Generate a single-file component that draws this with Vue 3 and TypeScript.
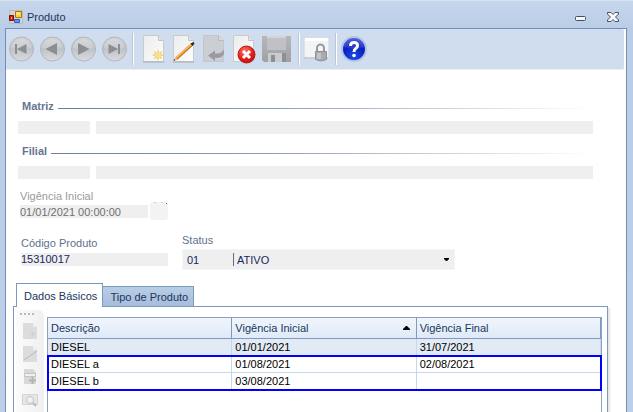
<script setup lang="ts">
import { ref } from 'vue'

interface Row {
  descricao: string
  inicio: string
  fim: string
}

const current: Row[] = [{ descricao: 'DIESEL', inicio: '01/01/2021', fim: '31/07/2021' }]
const highlighted: Row[] = [
  { descricao: 'DIESEL a', inicio: '01/08/2021', fim: '02/08/2021' },
  { descricao: 'DIESEL b', inicio: '03/08/2021', fim: '' },
]

const navButtons = [
  { label: 'Primeiro', bar: 'M7 8h2v10H7z', arrow: 'M18.500 8v10L9 13z' },
  { label: 'Anterior', bar: '', arrow: 'M18 7v12L6.500 13z' },
  { label: 'Próximo', bar: '', arrow: 'M8 7v12l11.500-6z' },
  { label: 'Último', bar: 'M17 8h2v10h-2z', arrow: 'M7.500 8v10L17 13z' },
]

const sections = [
  { id: 'matriz', title: 'Matriz' },
  { id: 'filial', title: 'Filial' },
]

const tab = ref(0)
const vigencia = ref('01/01/2021 00:00:00')
const codigo = ref('15310017')
const statusCode = ref('01')
const status = ref('ATIVO')
</script>

<template>
  <div class="window">
    <header class="titlebar">
      <svg class="app-icon" width="14" height="14" viewBox="0 0 14 14" aria-hidden="true">
        <path d="M.5.500h13v13H.5z" fill="#d0d4da" stroke="#b9bcc2" />
        <path d="M.5 5.500h4v5h-4z" fill="#d81e10" stroke="#7f0c08" />
        <path d="M2 7h1v2H2z" fill="#ffb0a0" />
        <path d="M6.500 1.500h6v6h-6z" fill="#ffd23c" stroke="#a87800" />
        <path d="M7.500 2.500h3v2h-3z" fill="#fff0a0" />
        <path d="M5.500 9.500h5v3h-5z" fill="#5b97ee" stroke="#2c60c0" />
      </svg>
      <h1>Produto</h1>
      <button class="win-btn" type="button" aria-label="Minimizar">
        <svg width="12" height="12" viewBox="0 0 12 12">
          <rect x=".5" y="5.500" width="10" height="4" rx="1" fill="#f4f7fb" stroke="#47505f" />
        </svg>
      </button>
      <button class="win-btn" type="button" aria-label="Fechar">
        <svg width="12" height="12" viewBox="0 0 12 12">
          <path
            d="M.5 1.500h3.500L6 3.500l2-2h3.500v1.500L8.500 6l3 3v1.500H8l-2-2-2 2H.5V9l3-3-3-3z"
            fill="#f7f9fc"
            stroke="#47505f"
          />
        </svg>
      </button>
    </header>

    <main class="body">
      <svg class="defs" width="0" height="0" aria-hidden="true">
        <defs>
          <linearGradient id="disc" x1="0" y1="0" x2="0" y2="1">
            <stop offset="0" stop-color="#d3d5d9" />
            <stop offset=".5" stop-color="#bfc2c7" />
            <stop offset="1" stop-color="#dadcdf" />
          </linearGradient>
          <linearGradient id="paper" x1="0" y1="0" x2="1" y2="1">
            <stop offset="0" stop-color="#ebecec" />
            <stop offset="1" stop-color="#fdfdfc" />
          </linearGradient>
          <linearGradient id="metal" x1="0" y1="0" x2="0" y2="1">
            <stop offset="0" stop-color="#b5b7ba" />
            <stop offset="1" stop-color="#9fa1a5" />
          </linearGradient>
          <radialGradient id="blue" cx=".5" cy=".8" r=".8">
            <stop offset="0" stop-color="#1c50e8" />
            <stop offset=".6" stop-color="#0a1cc0" />
            <stop offset="1" stop-color="#3c5cd8" />
          </radialGradient>
          <radialGradient id="red" cx=".4" cy=".3" r=".8">
            <stop offset="0" stop-color="#ff7466" />
            <stop offset=".6" stop-color="#e21e18" />
            <stop offset="1" stop-color="#b00c0a" />
          </radialGradient>
        </defs>
      </svg>

      <nav class="toolbar" aria-label="Ações">
        <button v-for="b in navButtons" :key="b.label" class="nav-btn" type="button" :aria-label="b.label">
          <svg width="26" height="26" viewBox="0 0 26 26">
            <circle cx="13.500" cy="13" r="12" fill="url(#disc)" stroke="#b3b6bb" />
            <path d="M3 12a10 9 0 0 1 20 0q-10 3-20 0z" fill="#fff" opacity=".15" />
            <path v-if="b.bar" :d="b.bar" fill="#8b8e93" />
            <path :d="b.arrow" fill="#8b8e93" />
          </svg>
        </button>
        <span class="sep"></span>
        <button class="doc-btn" type="button" aria-label="Novo">
          <svg width="24" height="30" viewBox="0 0 24 30">
            <path d="M1.500 1.500h15l5 5v21h-20z" fill="url(#paper)" stroke="#c9cbcd" />
            <path d="M1 28h21" stroke="#a8abad" />
            <path d="M16.500 1.500v5h5" fill="#dfe3e8" stroke="#c3c7cb" />
            <path
              d="M16 15l1.200 3.500 3.300-1.800-1.700 3.300 3.700 1-3.700 1.200 1.700 3.300-3.300-1.700L16 27.500l-1.200-3.700-3.300 1.700 1.700-3.300L9.500 21l3.700-1-1.700-3.300 3.300 1.800z"
              fill="#f0ce6c"
            />
            <circle cx="16" cy="21" r="3" fill="#f7df96" />
          </svg>
        </button>
        <button class="doc-btn" type="button" aria-label="Editar">
          <svg width="24" height="30" viewBox="0 0 24 30">
            <path d="M1.500 1.500h15l5 5v21h-20z" fill="url(#paper)" stroke="#c9cbcd" />
            <path d="M1 28h21" stroke="#a8abad" />
            <path d="M16.500 1.500v5h5" fill="#dfe3e8" stroke="#c3c7cb" />
            <path d="M4 25L20 10.500" stroke="#b86f22" stroke-width="3" />
            <path d="M4 24L19.500 10" stroke="#f8b254" stroke-width="2" />
            <path d="M1.500 27l1.500-4 2.500 2.500z" fill="#e8c490" />
            <path d="M1.500 27l1-2 1 1zM18.500 9.500l3-1.500 1 1.500-2 2.500z" fill="#25282e" />
          </svg>
        </button>
        <button class="doc-btn" type="button" aria-label="Desfazer">
          <svg width="24" height="30" viewBox="0 0 24 30">
            <path d="M1.500 1.500h15l5 5v21h-20z" fill="#cbced2" stroke="#c3c6ca" />
            <path d="M16.500 1.500v5h5" fill="#d7dbe0" stroke="#b8bbc0" />
            <path d="M21 15q4 9-8 9v3l-7-5.500 7-5v3q8 .5 8-4.500z" fill="#989ba0" />
          </svg>
        </button>
        <button class="doc-btn" type="button" aria-label="Excluir">
          <svg width="24" height="30" viewBox="0 0 24 30">
            <path d="M1.500 1.500h15l5 5v21h-20z" fill="url(#paper)" stroke="#c9cbcd" />
            <path d="M16.500 1.500v5h5" fill="#dfe3e8" stroke="#c3c7cb" />
            <circle cx="14.500" cy="20.500" r="8.500" fill="url(#red)" stroke="#b41a16" />
            <path d="M11 17l7 7m0-7l-7 7" stroke="#fff" stroke-width="3" />
          </svg>
        </button>
        <button class="save-btn" type="button" aria-label="Salvar">
          <svg width="30" height="30" viewBox="0 0 30 30">
            <path d="M0 2h29v26H2l-2-2z" fill="url(#metal)" />
            <path d="M5 2h19v14H5z" fill="#bfc1c4" />
            <path d="M5 2h19v2H5z" fill="#d2d4d6" />
            <path d="M6 19h18v9H6z" fill="#c9cbcd" />
            <path d="M9 21h4v7H9zM20 19h4v9h-4z" fill="#8d9094" />
          </svg>
        </button>
        <span class="sep"></span>
        <button class="lock-btn" type="button" aria-label="Bloquear">
          <svg width="26" height="30" viewBox="0 0 26 30">
            <path d="M.5 4.500h24v19H.5z" fill="#f3f4f6" stroke="#dfe2e6" />
            <path d="M1 4h23v3H1z" fill="#fff" />
            <path d="M0 24h24" stroke="#b9bdc3" />
            <path d="M13 18v-4a3.500 3.500 0 0 1 7 0v4" fill="none" stroke="#96999e" stroke-width="2" />
            <path d="M11.500 17.500h11v8q-5.500 3-11 0z" fill="#a8aaae" stroke="#8e9196" />
            <path d="M13 19h4v6h-4z" fill="#c2c4c7" />
          </svg>
        </button>
        <span class="sep"></span>
        <button class="help-btn" type="button" aria-label="Ajuda">
          <svg width="28" height="28" viewBox="0 0 28 28">
            <circle cx="13" cy="14" r="12" fill="url(#blue)" stroke="#b4c2e4" stroke-width="2" />
            <path d="M3 12a10 9 0 0 1 20 0q-10 3-20 0z" fill="#fff" opacity=".12" />
            <path
              d="M9.500 11q0-3.500 3.500-3.500t3.500 3q0 2-1.750 3T13 17"
              fill="none"
              stroke="#fff"
              stroke-width="3"
            />
            <circle cx="13" cy="20.500" r="1.800" fill="#fff" />
          </svg>
        </button>
      </nav>

      <form class="form" @submit.prevent>
        <section v-for="s in sections" :key="s.id" class="company">
          <h2>{{ s.title }}</h2>
          <div class="company-fields">
            <input class="box" type="text" readonly :aria-label="s.title + ' código'" />
            <input class="box" type="text" readonly :aria-label="s.title + ' nome'" />
          </div>
        </section>

        <div class="date-field">
          <label class="muted" for="vigencia">Vigência Inicial</label>
          <div class="date-row">
            <input id="vigencia" v-model="vigencia" class="box date" type="text" readonly />
            <button class="calendar" type="button" aria-label="Calendário">
              <svg width="18" height="18" viewBox="0 0 18 18">
                <path d="M4 0h2v1H4zM11 0h2v1h-2z" fill="#d0d0d0" />
                <path d="M16 1h1v1h-1z" fill="#555" />
              </svg>
            </button>
          </div>
        </div>

        <div class="pair">
          <div class="code-field">
            <label for="codigo">Código Produto</label>
            <input id="codigo" v-model="codigo" class="box code" type="text" readonly />
          </div>
          <div class="status-field">
            <label for="status">Status</label>
            <div class="combo">
              <input v-model="statusCode" class="combo-code" type="text" readonly aria-label="Código do status" />
              <select id="status" v-model="status">
                <option>ATIVO</option>
                <option>INATIVO</option>
              </select>
              <svg class="caret" width="5" height="3" viewBox="0 0 5 3" aria-hidden="true">
                <path d="M0 0h5v1L3 3H2L0 1z" fill="#000" />
              </svg>
            </div>
          </div>
        </div>
      </form>

      <div class="tabs" role="tablist">
        <button type="button" role="tab" :class="{ active: tab === 0 }" @click="tab = 0">Dados Básicos</button>
        <button type="button" role="tab" :class="{ active: tab === 1 }" @click="tab = 1">Tipo de Produto</button>
      </div>

      <section class="panel">
        <div class="side">
          <span class="grip"><i v-for="n in 4" :key="n"></i></span>
          <button type="button" aria-label="Novo item">
            <svg width="16" height="16" viewBox="0 0 16 16">
              <path d="M1 0h10l4 4v12H1z" fill="#dcdcdc" />
              <path d="M11 0v4h4z" fill="#efefef" />
              <path d="M11 8l1 2 2 1-2 1-1 2-1-2-2-1 2-1z" fill="#d2d2d2" />
            </svg>
          </button>
          <button type="button" aria-label="Editar item">
            <svg width="16" height="16" viewBox="0 0 16 16">
              <path d="M1 0h10l4 4v12H1z" fill="#dcdcdc" />
              <path d="M11 0v4h4z" fill="#efefef" />
              <path d="M2 14L15 5" stroke="#b8b8b8" />
            </svg>
          </button>
          <button type="button" aria-label="Inserir item">
            <svg width="16" height="16" viewBox="0 0 16 16">
              <path d="M2 0h9l3 3v12H2z" fill="#d8d8d8" />
              <path d="M2.500 4.500h11v3h-11z" fill="#f0f0f0" stroke="#c4c4c4" />
              <path d="M10.500 8v7M7 11.500h7" stroke="#b4b4b4" stroke-width="2" />
            </svg>
          </button>
          <button type="button" aria-label="Consultar item">
            <svg width="16" height="16" viewBox="0 0 16 16">
              <path d="M.5 2.500h15v10H.5z" fill="#e6e6e6" stroke="#d4d4d4" />
              <circle cx="8" cy="8" r="3.500" fill="#f0f0f0" stroke="#c4c4c4" />
              <path d="M11 11l3 3" stroke="#b8b8b8" stroke-width="2" />
            </svg>
          </button>
        </div>

        <div class="grid">
          <table>
            <thead>
              <tr>
                <th scope="col">Descrição</th>
                <th scope="col" aria-sort="ascending">
                  <span class="sorted">
                    Vigência Inicial
                    <svg width="7" height="4" viewBox="0 0 7 4" aria-hidden="true">
                      <path d="M3 0h1l3 3v1H0V3z" fill="#000" />
                    </svg>
                  </span>
                </th>
                <th scope="col">Vigência Final</th>
              </tr>
            </thead>
            <tbody class="selected">
              <tr v-for="r in current" :key="r.descricao">
                <td>{{ r.descricao }}</td>
                <td>{{ r.inicio }}</td>
                <td>{{ r.fim }}</td>
              </tr>
            </tbody>
            <tbody class="marked">
              <tr v-for="r in highlighted" :key="r.descricao">
                <td>{{ r.descricao }}</td>
                <td>{{ r.inicio }}</td>
                <td>{{ r.fim }}</td>
              </tr>
            </tbody>
          </table>
        </div>
      </section>
    </main>
  </div>
</template>

<style>
body {
  overflow: hidden;
}
</style>

<style scoped>
.window,
.window * {
  box-sizing: border-box;
}
.window {
  display: flex;
  flex-direction: column;
  height: 100vh;
  padding: 0 6px 0 5px;
  background: linear-gradient(#c5d6ec, #bbcde6 28px, #bed0e9);
  border-top: 1px solid #d3e4f2;
  font-family: 'Liberation Sans', Arial, sans-serif;
  font-size: 11px;
  line-height: 14px;
  color: #20365c;
}
button,
input,
select {
  margin: 0;
  padding: 0;
  border: 0;
  border-radius: 0;
  background: none;
  color: inherit;
  font: inherit;
}
svg {
  display: block;
}
.defs {
  position: absolute;
}
.titlebar {
  display: flex;
  flex: none;
  align-items: center;
  height: 27px;
  padding: 4px 8px 0 4px;
}
h1 {
  flex: 1;
  margin: 0 0 0 4px;
  font-size: 11px;
  font-weight: 400;
}
.win-btn {
  width: 12px;
  margin-left: 20px;
}
.body {
  display: flex;
  flex: 1;
  flex-direction: column;
  min-height: 0;
  background: #fff;
  border: 1px solid #6d90b8;
  border-bottom: 0;
}
.toolbar {
  display: flex;
  flex: none;
  align-items: center;
  height: 41px;
  margin-right: 2px;
  padding-left: 2px;
  background: #d0ddee;
  border-bottom: 1px solid #e8eef6;
  border-radius: 0 2px 2px 0;
}
.nav-btn {
  width: 31px;
}
.sep {
  width: 2px;
  height: 32px;
  margin-right: 4px;
  background: linear-gradient(90deg, #bcc7d6 50%, #fff 50%);
}
.nav-btn + .sep {
  margin-right: 8px;
}
.doc-btn {
  width: 30px;
}
.save-btn {
  width: 36px;
}
.lock-btn {
  width: 31px;
}
.help-btn {
  width: 28px;
}
.form {
  flex: none;
  padding: 29px 33px 13px 12px;
}
.company {
  margin-bottom: 10px;
}
h2 {
  display: flex;
  align-items: center;
  gap: 4px;
  margin: 0 0 8px;
  padding-left: 4px;
  font-size: 11px;
  line-height: 14px;
  color: #66758f;
}
h2::after {
  content: '';
  flex: 1;
  height: 1px;
  margin-top: 4px;
  background: linear-gradient(90deg, #6f8096, #8e9db2 40%, #fff);
}
.company-fields {
  display: grid;
  grid-template-columns: 72px 1fr;
  gap: 6px;
}
.box {
  width: 100%;
  height: 13px;
  background: #efefef;
}
label {
  display: block;
  height: 16px;
  color: #60718c;
}
.date-field {
  margin-left: 2px;
}
.date-field .muted {
  color: #9b9b9b;
}
.date-row {
  display: flex;
  gap: 2px;
}
.date {
  width: 128px;
  color: #6f6f6f;
}
.calendar {
  width: 18px;
  height: 18px;
  margin: -3px 0 -2px;
  background: #f3f3f3;
  border-radius: 3px;
}
.pair {
  display: flex;
  align-items: flex-start;
  gap: 14px;
  margin: 15px 0 0 3px;
}
.code-field {
  width: 147px;
  padding-top: 3px;
}
.code,
.combo {
  color: #17275c;
}
.combo {
  position: relative;
  display: flex;
  width: 273px;
  height: 21px;
  padding: 3px 0;
  background: #efefef;
  border: 1px solid #f3f6fb;
}
.combo-code {
  width: 50px;
  padding-left: 4px;
}
.combo select {
  flex: 1;
  padding-left: 3px;
  border-left: 1px solid #5f6c84;
  appearance: none;
}
.caret {
  position: absolute;
  right: 5px;
  top: 8px;
}
.tabs {
  display: flex;
  flex: none;
  align-items: flex-end;
  height: 23px;
  padding-left: 10px;
}
.tabs button {
  height: 20px;
  padding: 0 5px 0 7px;
  background: linear-gradient(#b9cde6, #a6bddb);
  border: 1px solid #7b99bf;
  border-left: 0;
  border-bottom: 0;
  white-space: nowrap;
}
.tabs button:first-child {
  border-left: 1px solid #7b99bf;
}
.tabs .active {
  position: relative;
  height: 24px;
  margin-bottom: -1px;
  background: #fff;
}
.panel {
  display: flex;
  flex: 1;
  min-height: 0;
  margin: 0 18px 0 7px;
  padding: 3px 5px 0 2px;
  border: 1px solid #7b99bf;
  border-bottom: 0;
  box-shadow: 2px 2px 2px #e0e3e8;
}
.side {
  display: flex;
  flex-direction: column;
  align-items: flex-start;
  gap: 7px;
  width: 28px;
  padding: 3px 0 0 6px;
  background: linear-gradient(90deg, #fbfbfb, #f0f0f0);
  border-radius: 3px 6px 0 0;
}
.side button {
  height: 16px;
}
.grip {
  display: flex;
  gap: 2px;
  height: 3px;
  margin-left: -2px;
}
.grip i {
  width: 2px;
  height: 2px;
  background: #b8b8b8;
}
.grid {
  flex: 1;
  margin: 7px 0 0 3px;
  border: 1px solid #8ba2c2;
  border-bottom: 0;
}
table {
  width: 100%;
  table-layout: fixed;
  border-collapse: separate;
  border-spacing: 0;
}
th {
  height: 21px;
  padding: 0 0 0 3px;
  background: linear-gradient(#f0f5fc, #dfeaf8);
  border-right: 1px solid #7f9abf;
  border-bottom: 1px solid #7f9abf;
  font-weight: 400;
  text-align: left;
}
.sorted {
  display: flex;
  align-items: center;
  justify-content: space-between;
  padding-right: 6px;
}
td {
  height: 17px;
  padding: 0 0 0 3px;
  border-right: 1px solid #c4d8ee;
  border-bottom: 1px solid #c4d8ee;
  color: #000;
}
.selected td {
  background: #e2ebf5;
}
.marked {
  outline: 2px solid #0000ff;
  outline-offset: -1px;
}
</style>
